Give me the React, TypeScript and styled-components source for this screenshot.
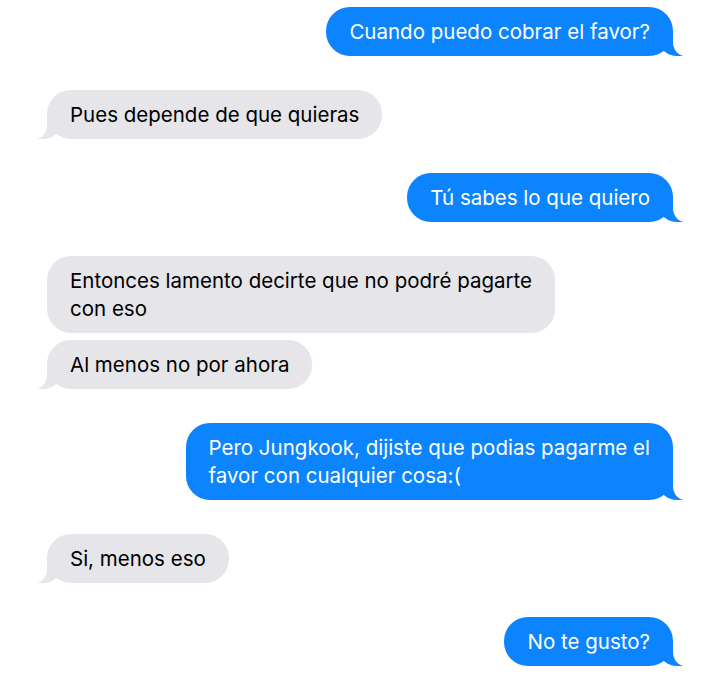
import styled, { createGlobalStyle, css } from "styled-components";

type Side = "me" | "them";

const GlobalStyle = createGlobalStyle`
  html, body {
    margin: 0;
    padding: 0;
    background: #ffffff;
  }
  body {
    font-family: Inter, "Liberation Sans", "Noto Sans", sans-serif;
    -webkit-font-smoothing: antialiased;
  }
`;

const thread: { side: Side; lines: string[][] }[] = [
  { side: "me", lines: [["Cuando puedo cobrar el favor?"]] },
  { side: "them", lines: [["Pues depende de que quieras"]] },
  { side: "me", lines: [["Tú sabes lo que quiero"]] },
  {
    side: "them",
    lines: [
      ["Entonces lamento decirte que no podré pagarte", "con eso"],
      ["Al menos no por ahora"],
    ],
  },
  {
    side: "me",
    lines: [
      ["Pero Jungkook, dijiste que podias pagarme el", "favor con cualquier cosa:("],
    ],
  },
  { side: "them", lines: [["Si, menos eso"]] },
  { side: "me", lines: [["No te gusto?"]] },
];

const App = () => {
  return (
    <>
      <GlobalStyle />
      <Thread>
        {thread.map((group, gi) => (
          <Group key={gi} $side={group.side}>
            {group.lines.map((msg, mi) => (
              <Bubble
                key={mi}
                $side={group.side}
                $tail={mi === group.lines.length - 1}
              >
                {msg.map((line, li) => (
                  <span key={li}>
                    {li > 0 && <br />}
                    {line}
                  </span>
                ))}
              </Bubble>
            ))}
          </Group>
        ))}
      </Thread>
    </>
  );
};

export default App;

const Thread = styled.div`
  display: flex;
  flex-direction: column;
  gap: 34px;
  width: 720px;
  box-sizing: border-box;
  padding: 7px 47px;
`;

const Group = styled.div<{ $side: Side }>`
  display: flex;
  flex-direction: column;
  gap: 7px;
  align-items: ${(p) => (p.$side === "me" ? "flex-end" : "flex-start")};
`;

const blue = "#0b84fe";
const grey = "#e5e5ea";

const Bubble = styled.div<{ $side: Side; $tail: boolean }>`
  position: relative;
  padding: 11px 23px 10px;
  border-radius: 24px;
  font-size: 20.5px;
  line-height: 28px;
  background: ${(p) => (p.$side === "me" ? blue : grey)};
  color: ${(p) => (p.$side === "me" ? "#ffffff" : "#000000")};

  ${(p) =>
    p.$tail &&
    p.$side === "me" &&
    css`
      &::before {
        content: "";
        position: absolute;
        bottom: 0;
        right: -10px;
        width: 24px;
        height: 26px;
        background: ${blue};
        border-bottom-left-radius: 18px 16px;
      }
      &::after {
        content: "";
        position: absolute;
        bottom: 0;
        right: -13px;
        width: 13px;
        height: 26px;
        background: #ffffff;
        border-bottom-left-radius: 12px 14px;
      }
    `}

  ${(p) =>
    p.$tail &&
    p.$side === "them" &&
    css`
      &::before {
        content: "";
        position: absolute;
        bottom: 0;
        left: -10px;
        width: 24px;
        height: 26px;
        background: ${grey};
        border-bottom-right-radius: 18px 16px;
      }
      &::after {
        content: "";
        position: absolute;
        bottom: 0;
        left: -13px;
        width: 13px;
        height: 26px;
        background: #ffffff;
        border-bottom-right-radius: 12px 14px;
      }
    `}
`;
